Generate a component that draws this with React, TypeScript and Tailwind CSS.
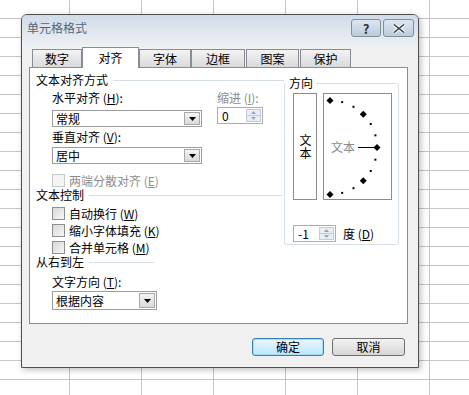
import React from "react"

const font = { fontFamily: '"Noto Sans CJK SC", "Noto Sans", sans-serif' }

function Mn({ k }: { k: string }) {
  return (
    <span>
      (<span className="underline underline-offset-1">{k}</span>)
    </span>
  )
}

function ArrowDown() {
  return (
    <svg width="7" height="4" viewBox="0 0 7 4">
      <path d="M0 0h7L3.5 4z" fill="#000" />
    </svg>
  )
}

function Select({ text, w, h }: { text: string; w: string; h: string }) {
  return (
    <div className={`${w} ${h} flex items-stretch border border-[#9c9c9c] bg-white`}>
      <div className="flex-1 flex items-center pl-[3px] text-[12px] leading-[14px]">{text}</div>
      <div className="w-[16px] my-px mr-px flex items-center justify-center border border-[#a8a8a8] bg-gradient-to-b from-[#f4f4f4] to-[#d9d9d9]">
        <ArrowDown />
      </div>
    </div>
  )
}

function Spin({ value, w }: { value: string; w: string }) {
  return (
    <div className={`${w} h-[17px] flex items-stretch border border-[#abadb3] bg-white`}>
      <div className="flex-1 flex items-center pl-[4px] text-[12px] leading-[14px]">{value}</div>
      <div className="w-[15px] flex flex-col my-px mr-px">
        <div className="flex-1 flex items-center justify-center border border-[#c4ccd6] bg-[#e9eef4]">
          <svg width="5" height="3" viewBox="0 0 5 3">
            <path d="M0 3h5L2.5 0z" fill="#9aa4b0" />
          </svg>
        </div>
        <div className="flex-1 flex items-center justify-center border border-t-0 border-[#c4ccd6] bg-[#e9eef4]">
          <svg width="5" height="3" viewBox="0 0 5 3">
            <path d="M0 0h5L2.5 3z" fill="#9aa4b0" />
          </svg>
        </div>
      </div>
    </div>
  )
}

function Check({ label, disabled }: { label: React.ReactNode; disabled?: boolean }) {
  return (
    <div className="flex items-center h-[13px]">
      <div
        className={
          disabled
            ? "w-[13px] h-[13px] border border-[#c8c8c8] bg-[#f4f4f4]"
            : "w-[13px] h-[13px] border border-[#8f8f8f] bg-gradient-to-br from-[#d8d8d8] to-[#f6f6f6]"
        }
      />
      <span className={`ml-[4px] text-[12px] leading-[14px] ${disabled ? "text-[#8d8d8d]" : "text-black"}`}>
        {label}
      </span>
    </div>
  )
}

function Heading({ text, lineW }: { text: string; lineW?: string }) {
  return (
    <div className="flex items-center h-[14px]">
      <span className="text-[12px] leading-[14px]">{text}</span>
      <div className={`${lineW ?? "flex-1"} ml-[5px] border-t border-[#d5dfe5]`} />
    </div>
  )
}

function Dial() {
  const pts = []
  for (let a = -90; a <= 90; a += 15) {
    const r = (a * Math.PI) / 180
    const x = 6 + 47 * Math.cos(r)
    const y = 53.5 - 47 * Math.sin(r)
    if (a % 45 === 0) {
      pts.push(<path key={a} d={`M${x} ${y - 3.5}L${x + 3.5} ${y}L${x} ${y + 3.5}L${x - 3.5} ${y}z`} fill="#000" />)
    } else {
      pts.push(<rect key={a} x={x - 1} y={y - 1} width="2" height="2" fill="#000" />)
    }
  }
  return (
    <div className="relative w-[69px] h-[107px] border border-[#8c8c8c] bg-white">
      <svg className="absolute left-0 top-0" width="67" height="105" viewBox="0 0 67 105">
        <line x1="34" y1="53.5" x2="50" y2="53.5" stroke="#000" strokeWidth="1" />
        {pts}
      </svg>
      <span className="absolute left-[7px] top-[46px] text-[12px] leading-[14px] text-[#8a8a8a]">文本</span>
    </div>
  )
}

export default function App() {
  const tabs = [
    { t: "数字", w: "w-[50px]" },
    { t: "对齐", w: "w-[57px]", active: true },
    { t: "字体", w: "w-[52px]" },
    { t: "边框", w: "w-[54px]" },
    { t: "图案", w: "w-[53px] ml-px" },
    { t: "保护", w: "w-[51px] ml-px" },
  ]

  return (
    <div
      className="relative w-[469px] h-[395px] overflow-hidden bg-white text-black [background-image:linear-gradient(to_right,#c6c6c6_1px,transparent_1px),linear-gradient(to_bottom,#c6c6c6_1px,transparent_1px)] [background-size:72px_19px] [background-position:69px_18px]"
      style={font}
    >
      {/* dialog */}
      <div className="absolute left-[21px] top-[14px] w-[398px] h-[354px] flex flex-col rounded-t-[6px] border border-[#4f4f4f] bg-[#f0f0f0] shadow-[2px_2px_6px_rgba(0,0,0,0.25)]">
        {/* title bar */}
        <div className="h-[32px] flex items-start justify-between rounded-t-[5px] bg-gradient-to-b from-[#d0dbe7] to-[#eef1f4] pl-[5px] pr-[4px]">
          <span className="pt-[6px] text-[12px] leading-[14px] text-[#56677c]">单元格格式</span>
          <div className="flex gap-[2px] pt-[4px]">
            <div className="w-[30px] h-[18px] flex items-center justify-center rounded-[3px] border border-[#7d8fa3] bg-gradient-to-b from-[#dde6ef] to-[#bccbdb] text-[13px] leading-none font-bold text-[#2c3440]">
              ?
            </div>
            <div className="w-[31px] h-[18px] flex items-center justify-center rounded-[3px] border border-[#7d8fa3] bg-gradient-to-b from-[#dde6ef] to-[#bccbdb]">
              <svg width="12" height="9" viewBox="0 0 12 9">
                <path d="M1 0.5L11 8.5M11 0.5L1 8.5" stroke="#fff" strokeWidth="3.5" />
                <path d="M1 0.5L11 8.5M11 0.5L1 8.5" stroke="#3a4452" strokeWidth="1.6" />
              </svg>
            </div>
          </div>
        </div>

        {/* tabs */}
        <div className="h-[20px] flex items-end pl-[10px]">
          {tabs.map((tab) =>
            tab.active ? (
              <div
                key={tab.t}
                className={`${tab.w} relative z-10 h-[21px] -mb-px flex items-center justify-center border border-b-0 border-[#898c95] bg-white text-[12px] leading-[14px]`}
              >
                {tab.t}
              </div>
            ) : (
              <div
                key={tab.t}
                className={`${tab.w} h-[18px] flex items-center justify-center border border-b-0 border-[#898c95] bg-gradient-to-b from-[#f3f3f3] to-[#dadada] text-[12px] leading-[14px]`}
              >
                {tab.t}
              </div>
            )
          )}
        </div>

        {/* panel */}
        <div className="ml-[7px] w-[379px] h-[257px] flex border border-[#898c95] bg-white">
          {/* left column */}
          <div className="w-[254px] pl-[6px] flex flex-col">
            <div className="mt-[5px]">
              <Heading text="文本对齐方式" />
            </div>
            <div className="pl-[16px] flex">
              <div className="flex flex-col">
                <span className="mt-[4px] text-[12px] leading-[14px]">
                  水平对齐 <Mn k="H" />:
                </span>
                <div className="mt-[5px]">
                  <Select text="常规" w="w-[150px]" h="h-[17px]" />
                </div>
                <span className="mt-[3px] text-[12px] leading-[14px]">
                  垂直对齐 <Mn k="V" />:
                </span>
                <div className="mt-[3px]">
                  <Select text="居中" w="w-[150px]" h="h-[17px]" />
                </div>
              </div>
              <div className="ml-[15px] flex flex-col">
                <span className="mt-[4px] text-[12px] leading-[14px] text-[#8d8d8d]">
                  缩进 <Mn k="I" />:
                </span>
                <div className="mt-[2px]">
                  <Spin value="0" w="w-[46px]" />
                </div>
              </div>
            </div>
            <div className="pl-[16px] mt-[10px]">
              <Check
                disabled
                label={
                  <>
                    两端分散对齐 <Mn k="E" />
                  </>
                }
              />
            </div>
            <div className="mt-px pr-[2px]">
              <Heading text="文本控制" />
            </div>
            <div className="pl-[16px] mt-[5px] flex flex-col gap-[4px]">
              <Check
                label={
                  <>
                    自动换行 <Mn k="W" />
                  </>
                }
              />
              <Check
                label={
                  <>
                    缩小字体填充 <Mn k="K" />
                  </>
                }
              />
              <Check
                label={
                  <>
                    合并单元格 <Mn k="M" />
                  </>
                }
              />
            </div>
            <div className="mt-px">
              <Heading text="从右到左" lineW="w-[65px]" />
            </div>
            <div className="pl-[16px] flex flex-col">
              <span className="mt-[6px] text-[12px] leading-[14px]">
                文字方向 <Mn k="T" />:
              </span>
              <div className="mt-[2px]">
                <Select text="根据内容" w="w-[105px]" h="h-[19px]" />
              </div>
            </div>
          </div>

          {/* orientation group */}
          <div className="relative mt-[15px] w-[115px] h-[162px] rounded-[3px] border border-[#d5dfe5] pl-[8px] pt-[9px]">
            <span className="absolute left-[1px] -top-[8px] bg-white px-[3px] text-[12px] leading-[14px]">方向</span>
            <div className="flex gap-[6px]">
              <div className="w-[24px] h-[107px] flex items-center justify-center border border-[#8c8c8c] bg-white">
                <span className="[writing-mode:vertical-rl] text-[12px] leading-[12px] tracking-[1px]">文本</span>
              </div>
              <Dial />
            </div>
            <div className="mt-[25px] flex items-center">
              <Spin value="-1" w="w-[43px]" />
              <span className="ml-[7px] text-[12px] leading-[14px]">
                度 <Mn k="D" />
              </span>
            </div>
          </div>
        </div>

        {/* buttons */}
        <div className="mt-[14px] pr-[13px] flex justify-end gap-[8px]">
          <div className="w-[72px] h-[18px] flex items-center justify-center rounded-[3px] border border-[#3c7fb1] bg-gradient-to-b from-[#eaf6fd] to-[#bee6fd] shadow-[inset_0_0_0_1px_#a6dcf7] text-[12px] leading-[14px]">
            确定
          </div>
          <div className="w-[73px] h-[18px] flex items-center justify-center rounded-[3px] border border-[#707070] bg-gradient-to-b from-[#f2f2f2] to-[#d6d6d6] text-[12px] leading-[14px]">
            取消
          </div>
        </div>
      </div>
    </div>
  )
}
